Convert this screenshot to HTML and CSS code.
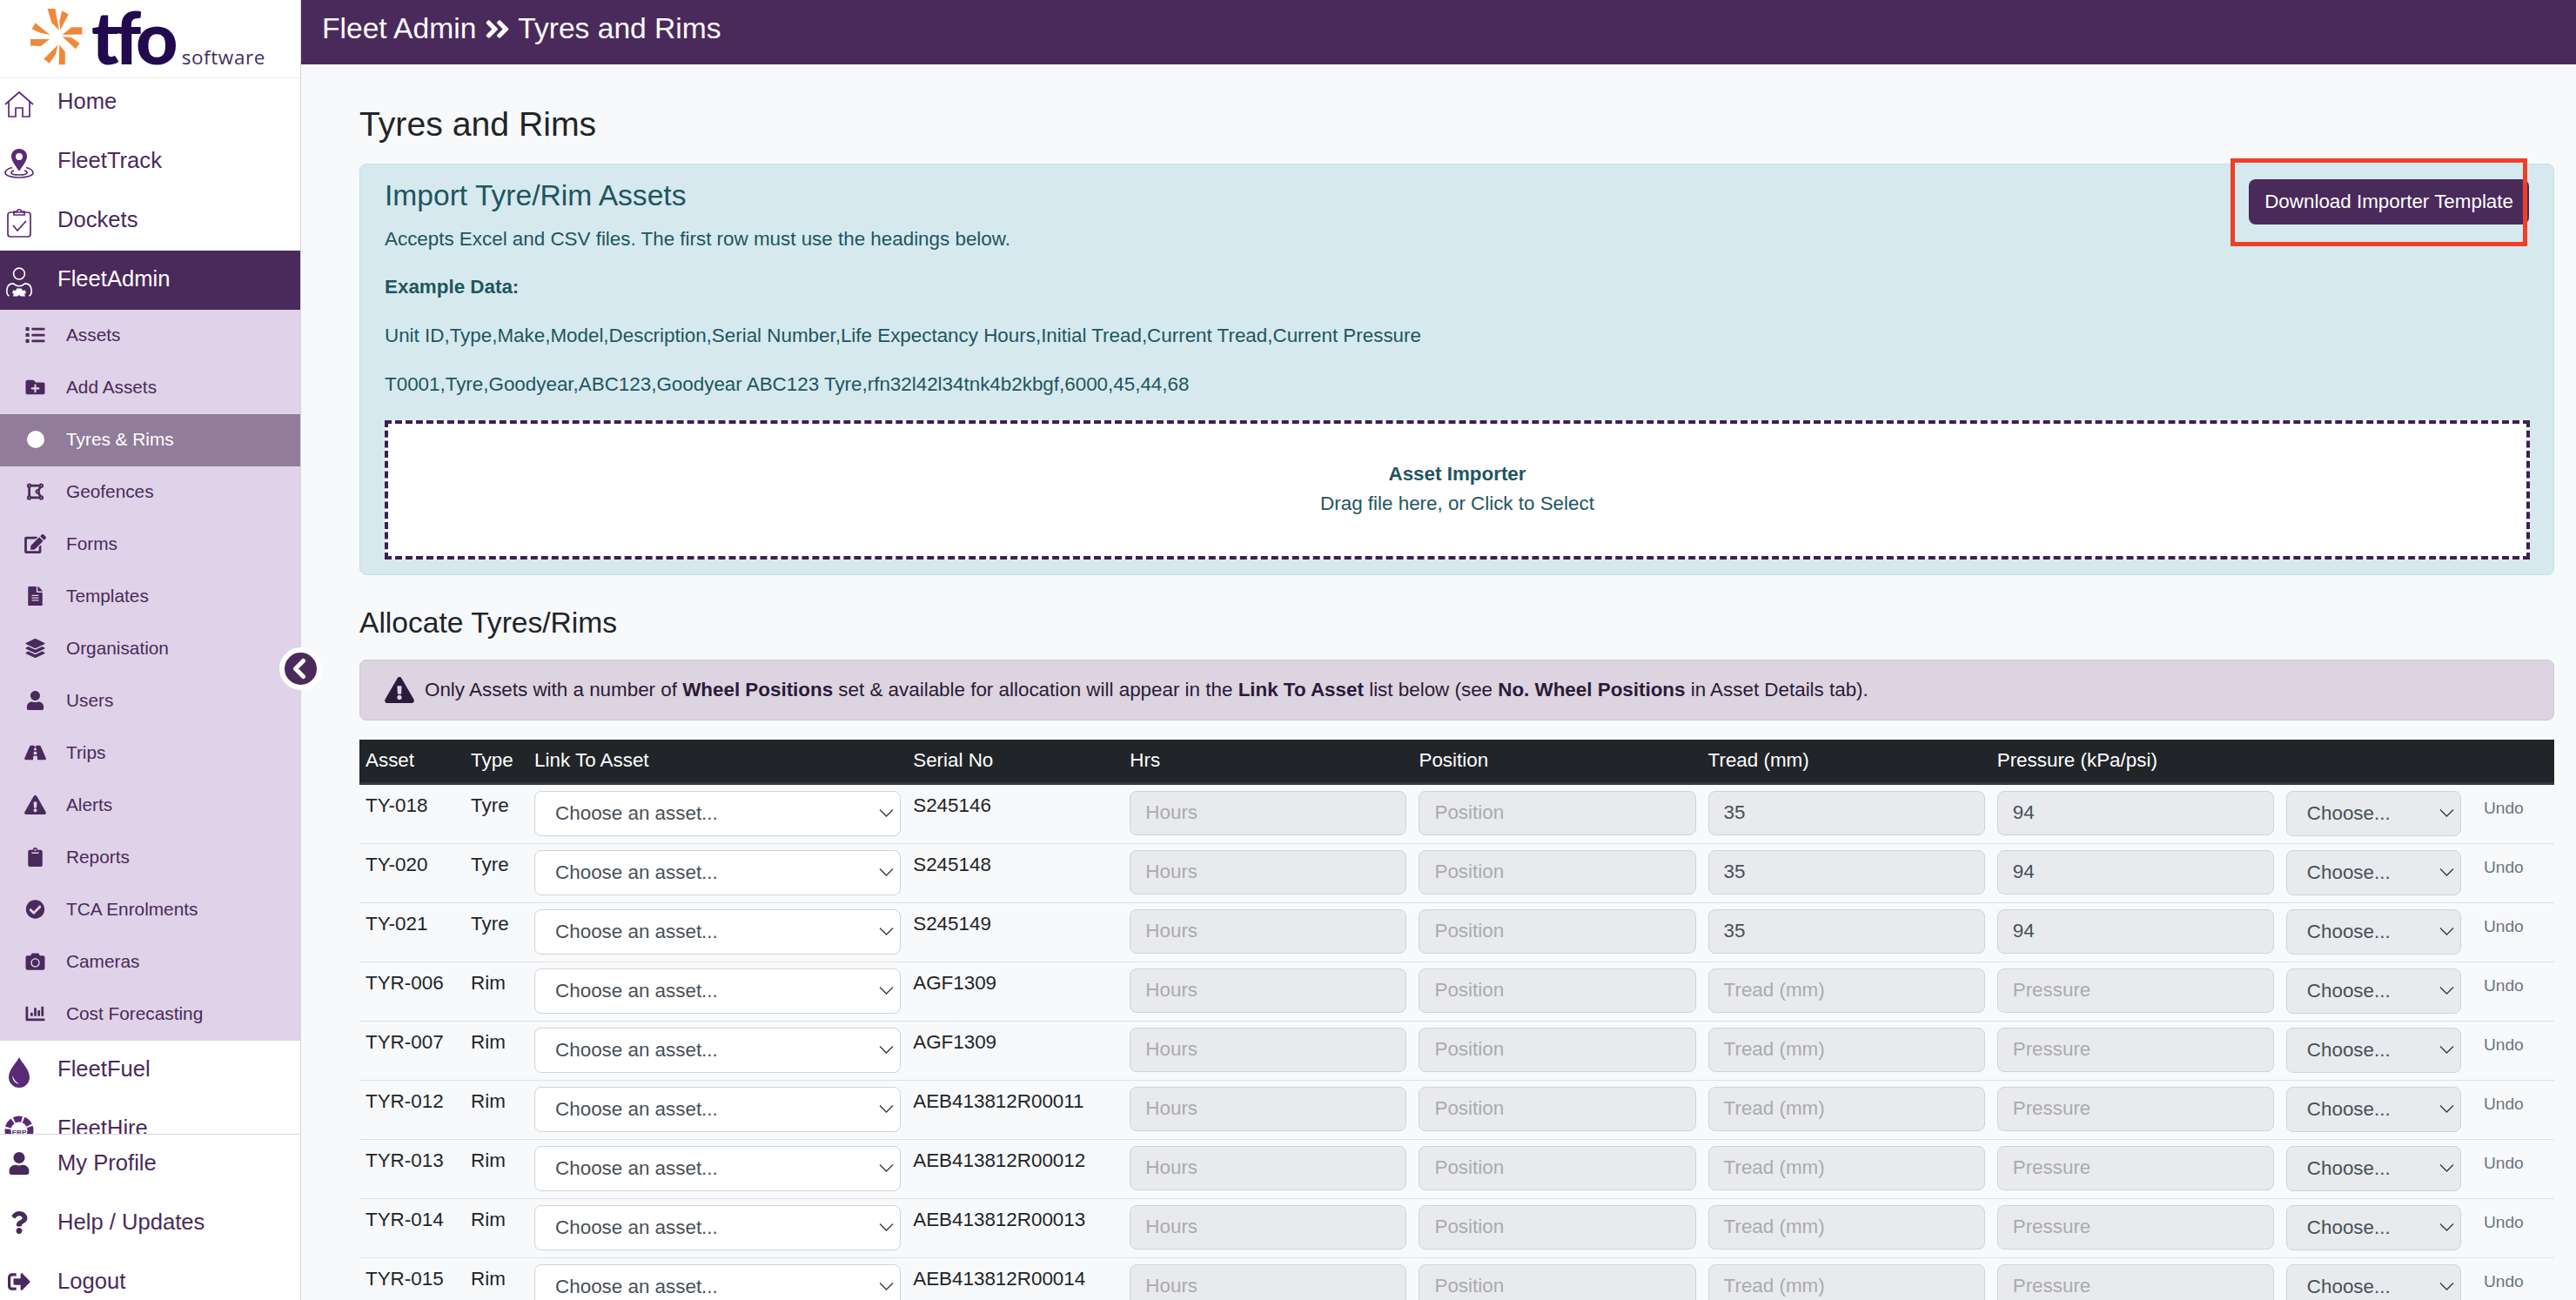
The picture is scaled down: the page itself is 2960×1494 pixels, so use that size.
FILE: index.html
```html
<!DOCTYPE html>
<html lang="en">

<head>
    <meta charset="UTF-8">
    <meta name="viewport" content="width=device-width, initial-scale=1.0">
    <title>Tyres and Rims</title>
    <link rel="stylesheet" href="styles.css">
</head>

<body>
    <svg class="iconDefs" aria-hidden="true">
        <symbol id="i-list" viewBox="0 0 512 512"><path d="M80 368H16a16 16 0 0 0-16 16v64a16 16 0 0 0 16 16h64a16 16 0 0 0 16-16v-64a16 16 0 0 0-16-16zm0-320H16A16 16 0 0 0 0 64v64a16 16 0 0 0 16 16h64a16 16 0 0 0 16-16V64a16 16 0 0 0-16-16zm0 160H16a16 16 0 0 0-16 16v64a16 16 0 0 0 16 16h64a16 16 0 0 0 16-16v-64a16 16 0 0 0-16-16zm416 176H176a16 16 0 0 0-16 16v32a16 16 0 0 0 16 16h320a16 16 0 0 0 16-16v-32a16 16 0 0 0-16-16zm0-320H176a16 16 0 0 0-16 16v32a16 16 0 0 0 16 16h320a16 16 0 0 0 16-16V80a16 16 0 0 0-16-16zm0 160H176a16 16 0 0 0-16 16v32a16 16 0 0 0 16 16h320a16 16 0 0 0 16-16v-32a16 16 0 0 0-16-16z"/></symbol>
        <symbol id="i-folder" viewBox="0 0 512 512"><path d="M464 128H272l-64-64H48C21.49 64 0 85.49 0 112v288c0 26.51 21.49 48 48 48h416c26.51 0 48-21.49 48-48V176c0-26.51-21.49-48-48-48zm-96 168c0 8.84-7.16 16-16 16h-72v72c0 8.84-7.16 16-16 16h-16c-8.84 0-16-7.16-16-16v-72h-72c-8.84 0-16-7.16-16-16v-16c0-8.84 7.16-16 16-16h72v-72c0-8.84 7.16-16 16-16h16c8.84 0 16 7.16 16 16v72h72c8.84 0 16 7.16 16 16v16z"/></symbol>
        <symbol id="i-polygon" viewBox="0 0 448 512"><path d="M384 352c-.35 0-.67.1-1.02.1l-39.2-65.32c5.07-9.17 8.22-19.56 8.22-30.78s-3.14-21.61-8.22-30.78l39.2-65.32c.35.01.67.1 1.02.1 35.35 0 64-28.65 64-64s-28.65-64-64-64c-23.63 0-44.04 12.95-55.12 32H119.12C108.04 44.95 87.63 32 64 32 28.65 32 0 60.65 0 96c0 23.63 12.95 44.04 32 55.12v209.75C12.95 371.96 0 392.37 0 416c0 35.35 28.65 64 64 64 23.63 0 44.04-12.95 55.12-32h209.75c11.09 19.05 31.49 32 55.12 32 35.35 0 64-28.65 64-64 .01-35.35-28.64-64-63.99-64zm-288 8.88V151.12A63.825 63.825 0 0 0 119.12 128h208.36l-38.46 64.1c-.35-.01-.67-.1-1.02-.1-35.35 0-64 28.65-64 64s28.65 64 64 64c.35 0 .67-.09 1.02-.1l38.46 64.1H119.12a63.748 63.748 0 0 0-23.12-23.12zM272 256c0-8.82 7.18-16 16-16s16 7.18 16 16-7.18 16-16 16-16-7.18-16-16zM400 96c0 8.82-7.18 16-16 16s-16-7.18-16-16 7.18-16 16-16 16 7.18 16 16zM64 80c8.82 0 16 7.18 16 16s-7.18 16-16 16-16-7.18-16-16 7.18-16 16-16zM48 416c0-8.82 7.18-16 16-16s16 7.18 16 16-7.18 16-16 16-16-7.18-16-16zm336 16c-8.82 0-16-7.18-16-16s7.18-16 16-16 16 7.18 16 16-7.18 16-16 16z"/></symbol>
        <symbol id="i-edit" viewBox="0 0 576 512"><path d="M402.6 83.2l90.2 90.2c3.8 3.8 3.8 10 0 13.8L274.4 405.6l-92.8 10.3c-12.4 1.4-22.9-9.1-21.5-21.5l10.3-92.8L388.8 83.2c3.8-3.8 10-3.8 13.8 0zm162-22.9l-48.8-48.8c-15.2-15.2-39.9-15.2-55.2 0l-35.4 35.4c-3.8 3.8-3.8 10 0 13.8l90.2 90.2c3.8 3.8 10 3.8 13.8 0l35.4-35.4c15.2-15.3 15.2-40 0-55.2zM384 346.2V448H64V128h229.8c3.2 0 6.2-1.3 8.5-3.5l40-40c7.6-7.6 2.2-20.5-8.5-20.5H48C21.5 64 0 85.5 0 112v352c0 26.5 21.5 48 48 48h352c26.5 0 48-21.5 48-48V306.2c0-10.7-12.9-16-20.5-8.5l-40 40c-2.2 2.3-3.5 5.3-3.5 8.5z"/></symbol>
        <symbol id="i-file" viewBox="0 0 384 512"><path d="M224 136V0H24C10.7 0 0 10.7 0 24v464c0 13.3 10.7 24 24 24h336c13.3 0 24-10.7 24-24V160H248c-13.2 0-24-10.8-24-24zm64 236c0 6.6-5.4 12-12 12H108c-6.6 0-12-5.4-12-12v-8c0-6.6 5.4-12 12-12h168c6.6 0 12 5.4 12 12v8zm0-64c0 6.6-5.4 12-12 12H108c-6.6 0-12-5.4-12-12v-8c0-6.6 5.4-12 12-12h168c6.6 0 12 5.4 12 12v8zm0-72v8c0 6.6-5.4 12-12 12H108c-6.6 0-12-5.4-12-12v-8c0-6.6 5.4-12 12-12h168c6.6 0 12 5.4 12 12zm96-114.1v6.1H256V0h6.1c6.4 0 12.5 2.5 17 7l97.9 98c4.5 4.5 7 10.6 7 16.9z"/></symbol>
        <symbol id="i-layers" viewBox="0 0 512 512"><path d="M12.41 148.02l232.94 105.67c6.8 3.09 14.49 3.09 21.29 0l232.94-105.67c16.55-7.51 16.55-32.52 0-40.03L266.65 2.31a25.607 25.607 0 0 0-21.29 0L12.41 107.98c-16.55 7.51-16.55 32.53 0 40.04zm487.18 88.28l-58.09-26.33-161.64 73.27c-7.56 3.43-15.59 5.17-23.86 5.17s-16.29-1.74-23.86-5.17L70.51 209.97l-58.1 26.33c-16.55 7.5-16.55 32.5 0 40l232.94 105.59c6.8 3.08 14.49 3.08 21.29 0L499.59 276.3c16.55-7.5 16.55-32.5 0-40zm0 127.8l-57.87-26.23-161.86 73.37c-7.56 3.43-15.59 5.17-23.86 5.17s-16.29-1.74-23.86-5.17L70.29 337.87 12.41 364.1c-16.55 7.5-16.55 32.5 0 40l232.94 105.59c6.8 3.08 14.49 3.08 21.29 0L499.59 404.1c16.55-7.5 16.55-32.5 0-40z"/></symbol>
        <symbol id="i-user" viewBox="0 0 448 512"><path d="M224 256c70.7 0 128-57.3 128-128S294.7 0 224 0 96 57.3 96 128s57.3 128 128 128zm89.6 32h-16.7c-22.2 10.2-46.9 16-72.9 16s-50.6-5.8-72.9-16h-16.7C60.2 288 0 348.2 0 422.4V464c0 26.5 21.5 48 48 48h352c26.5 0 48-21.5 48-48v-41.6c0-74.2-60.2-134.4-134.4-134.4z"/></symbol>
        <symbol id="i-road" viewBox="0 0 576 512"><path d="M573.19 402.67l-139.79-320C428.43 71.29 417.6 64 405.68 64h-97.59l2.45 23.16c.5 4.72-3.21 8.84-7.96 8.84h-29.16c-4.75 0-8.46-4.12-7.96-8.84L267.91 64h-97.59c-11.93 0-22.76 7.29-27.73 18.67L2.8 402.67C-6.45 423.86 8.31 448 30.54 448h196.84l10.31-97.68c.86-8.14 7.72-14.32 15.91-14.32h68.8c8.19 0 15.05 6.18 15.91 14.32L348.62 448h196.84c22.23 0 36.99-24.14 27.73-45.33zM260.4 135.16a8 8 0 0 1 7.96-7.16h39.29c4.09 0 7.53 3.09 7.96 7.16l4.6 43.58c.75 7.09-4.81 13.26-11.93 13.26h-40.54c-7.13 0-12.68-6.17-11.93-13.26l4.59-43.58zM315.64 304h-55.29c-9.5 0-16.91-8.23-15.91-17.68l5.07-48c.86-8.14 7.72-14.32 15.91-14.32h45.15c8.19 0 15.05 6.18 15.91 14.32l5.07 48c1 9.45-6.41 17.68-15.91 17.68z"/></symbol>
        <symbol id="i-warn" viewBox="0 0 576 512"><path d="M569.517 440.013C587.975 472.007 564.806 512 527.94 512H48.054c-36.937 0-59.999-40.055-41.577-71.987L246.423 23.985c18.467-32.009 64.72-31.951 83.154 0l239.94 416.028zM288 354c-25.405 0-46 20.595-46 46s20.595 46 46 46 46-20.595 46-46-20.595-46-46-46zm-43.673-165.346l7.418 136c.347 6.364 5.609 11.346 11.982 11.346h48.546c6.373 0 11.635-4.982 11.982-11.346l7.418-136c.375-6.874-5.098-12.654-11.982-12.654h-63.383c-6.884 0-12.356 5.78-11.981 12.654z"/></symbol>
        <symbol id="i-clipboard" viewBox="0 0 384 512"><path d="M384 112v352c0 26.51-21.49 48-48 48H48c-26.51 0-48-21.49-48-48V112c0-26.51 21.49-48 48-48h80c0-35.29 28.71-64 64-64s64 28.71 64 64h80c26.51 0 48 21.49 48 48zM192 40c-13.255 0-24 10.745-24 24s10.745 24 24 24 24-10.745 24-24-10.745-24-24-24m96 114v-20a6 6 0 0 0-6-6H102a6 6 0 0 0-6 6v20a6 6 0 0 0 6 6h180a6 6 0 0 0 6-6z"/></symbol>
        <symbol id="i-check" viewBox="0 0 512 512"><path d="M504 256c0 136.967-111.033 248-248 248S8 392.967 8 256 119.033 8 256 8s248 111.033 248 248zM227.314 387.314l184-184c6.248-6.248 6.248-16.379 0-22.627l-22.627-22.627c-6.248-6.249-16.379-6.249-22.628 0L216 308.118l-70.059-70.059c-6.248-6.248-16.379-6.248-22.628 0l-22.627 22.627c-6.248 6.248-6.248 16.379 0 22.627l104 104c6.249 6.249 16.379 6.249 22.628.001z"/></symbol>
        <symbol id="i-camera" viewBox="0 0 512 512"><path d="M512 144v288c0 26.5-21.5 48-48 48H48c-26.5 0-48-21.5-48-48V144c0-26.5 21.5-48 48-48h88l12.3-32.9c7-18.7 24.9-31.1 44.9-31.1h125.5c20 0 37.9 12.4 44.9 31.1L376 96h88c26.5 0 48 21.5 48 48zM376 288c0-66.2-53.8-120-120-120s-120 53.8-120 120 53.8 120 120 120 120-53.8 120-120zm-32 0c0 48.5-39.5 88-88 88s-88-39.5-88-88 39.5-88 88-88 88 39.5 88 88z"/></symbol>
        <symbol id="i-chart" viewBox="0 0 512 512"><path d="M332.8 320h38.4c6.4 0 12.8-6.4 12.8-12.8V172.8c0-6.4-6.4-12.8-12.8-12.8h-38.4c-6.4 0-12.8 6.4-12.8 12.8v134.4c0 6.4 6.4 12.8 12.8 12.8zm96 0h38.4c6.4 0 12.8-6.4 12.8-12.8V76.8c0-6.4-6.4-12.8-12.8-12.8h-38.4c-6.4 0-12.8 6.4-12.8 12.8v230.4c0 6.4 6.4 12.8 12.8 12.8zm-288 0h38.4c6.4 0 12.8-6.4 12.8-12.8v-70.4c0-6.4-6.4-12.8-12.8-12.8h-38.4c-6.4 0-12.8 6.4-12.8 12.8v70.4c0 6.4 6.4 12.8 12.8 12.8zm96 0h38.4c6.4 0 12.8-6.4 12.8-12.8V108.8c0-6.4-6.4-12.8-12.8-12.8h-38.4c-6.4 0-12.8 6.4-12.8 12.8v198.4c0 6.4 6.4 12.8 12.8 12.8zM496 384H64V80c0-8.84-7.16-16-16-16H16C7.16 64 0 71.16 0 80v336c0 17.67 14.33 32 32 32h464c8.84 0 16-7.16 16-16v-32c0-8.84-7.16-16-16-16z"/></symbol>
        <symbol id="i-question" viewBox="0 0 384 512"><path d="M202.021 0C122.202 0 70.503 32.703 29.914 91.026c-7.363 10.58-5.093 25.086 5.178 32.874l43.138 32.709c10.373 7.865 25.132 6.026 33.253-4.148 25.049-31.381 43.63-49.449 82.757-49.449 30.764 0 68.816 19.799 68.816 49.631 0 22.552-18.617 34.134-48.993 51.164-35.423 19.86-82.299 44.576-82.299 106.405V320c0 13.255 10.745 24 24 24h72.471c13.255 0 24-10.745 24-24v-5.773c0-42.86 125.268-44.645 125.268-160.627C377.504 66.256 286.902 0 202.021 0zM192 373.459c-38.196 0-69.271 31.075-69.271 69.271 0 38.195 31.075 69.27 69.271 69.27s69.271-31.075 69.271-69.271-31.075-69.27-69.271-69.27z"/></symbol>
        <symbol id="i-logout" viewBox="0 0 512 512"><path d="M497 273L329 441c-15 15-41 4.5-41-17v-96H152c-13.3 0-24-10.7-24-24v-96c0-13.3 10.7-24 24-24h136V88c0-21.4 25.9-32 41-17l168 168c9.3 9.4 9.3 24.6 0 34zM192 436v-40c0-6.6-5.4-12-12-12H96c-17.7 0-32-14.3-32-32V160c0-17.7 14.3-32 32-32h84c6.6 0 12-5.4 12-12V76c0-6.6-5.4-12-12-12H96c-53 0-96 43-96 96v192c0 53 43 96 96 96h84c6.6 0 12-5.4 12-12z"/></symbol>
        <symbol id="i-double" viewBox="0 0 448 512"><path d="M224.3 273l-136 136c-9.4 9.4-24.6 9.4-33.9 0l-22.6-22.6c-9.4-9.4-9.4-24.6 0-33.9l96.4-96.4-96.4-96.4c-9.4-9.4-9.4-24.6 0-33.9L54.3 103c9.4-9.4 24.6-9.4 33.9 0l136 136c9.5 9.4 9.5 24.6.1 34zm192-34l-136-136c-9.4-9.4-24.6-9.4-33.9 0l-22.6 22.6c-9.4 9.4-9.4 24.6 0 33.9l96.4 96.4-96.4 96.4c-9.4 9.4-9.4 24.6 0 33.9l22.6 22.6c9.4 9.4 24.6 9.4 33.9 0l136-136c9.4-9.2 9.4-24.4 0-33.8z"/></symbol>
    </svg>

    <div class="app">
        <aside class="sidebar">
            <div class="logo">
                <svg class="logoMark" viewBox="100 25 190 202">
                    <polygon points="163,28 190,28 204,104 178,78"/>
                    <polygon points="214,35 237,48 208,104 205,72"/>
                    <polygon points="285,93 285,118 215,120 248,93"/>
                    <polygon points="277,150 262,170 215,126 248,130"/>
                    <polygon points="225,225 203,225 205,155 225,180"/>
                    <polygon points="170,220 150,205 200,155 192,188"/>
                    <polygon points="103,158 103,135 170,135 140,160"/>
                    <polygon points="108,100 120,78 172,120 138,113"/>
                </svg>
                <span class="logoName">tfo</span>
                <span class="logoSub">software</span>
            </div>

            <nav class="navScroll">
                <a class="navItem">
                    <span class="navIcon">
                        <svg class="drawn" viewBox="0 0 34 30"><path d="M1 15 17 1l16 14M5 12v17h8V19h8v10h8V12"/></svg>
                    </span>
                    <span class="navText">Home</span>
                </a>
                <a class="navItem">
                    <span class="navIcon">
                        <svg class="drawn" viewBox="0 0 34 34"><path d="M9 21.5C3.5 23 1 25 1 27.500 1 30.800 8 33 17 33s16-2.200 16-5.500c0-2.500-2.500-4.500-8-6"/><path d="M11 25c-2 .6-3 1.500-3 2.500C8 29 12 30 17 30s9-1 9-2.500c0-1-1-1.900-3-2.500"/><path class="drawnFill" fill-rule="evenodd" d="M17 0c5.200 0 9 3.800 9 8.800 0 5-5 11-9 17-4-6-9-12-9-17C8 3.800 11.800 0 17 0zm0 5a4 4 0 1 0 0 8 4 4 0 0 0 0-8z"/></svg>
                    </span>
                    <span class="navText">FleetTrack</span>
                </a>
                <a class="navItem">
                    <span class="navIcon">
                        <svg class="drawn" viewBox="0 0 34 34"><rect x="4" y="5" width="26" height="28" rx="3"/><path d="M11 8V4h3.500c.5-3 4.500-3 5 0H23v4zM10 20l5 6 10-11"/></svg>
                    </span>
                    <span class="navText">Dockets</span>
                </a>
                <a class="navItem navItemActive">
                    <span class="navIcon">
                        <svg class="drawn" viewBox="0 0 34 36"><circle cx="17" cy="8" r="6.800"/><path d="M5 35c-2.500-1-3-3-3-6 0-6 3-9 8-9 2 2 4 3 7 3s5-1 7-3c5 0 8 3 8 9 0 3-.5 5-3 6"/><path class="drawnFill" d="M14 26h6l1 2.500 3-.5 1.500 3-2 2 1 2.500h-5.500L17 34l-2 1.500H9.500l1-2.500-2-2 1.500-3 3 .5z"/></svg>
                    </span>
                    <span class="navText">FleetAdmin</span>
                </a>

                <div class="subNav">
                    <a class="subItem"><svg class="subIcon"><use href="#i-list"/></svg><span>Assets</span></a>
                    <a class="subItem"><svg class="subIcon"><use href="#i-folder"/></svg><span>Add Assets</span></a>
                    <a class="subItem subItemActive"><span class="subDot"></span><span>Tyres &amp; Rims</span></a>
                    <a class="subItem"><svg class="subIcon"><use href="#i-polygon"/></svg><span>Geofences</span></a>
                    <a class="subItem"><svg class="subIcon"><use href="#i-edit"/></svg><span>Forms</span></a>
                    <a class="subItem"><svg class="subIcon"><use href="#i-file"/></svg><span>Templates</span></a>
                    <a class="subItem"><svg class="subIcon"><use href="#i-layers"/></svg><span>Organisation</span></a>
                    <a class="subItem"><svg class="subIcon"><use href="#i-user"/></svg><span>Users</span></a>
                    <a class="subItem"><svg class="subIcon"><use href="#i-road"/></svg><span>Trips</span></a>
                    <a class="subItem"><svg class="subIcon"><use href="#i-warn"/></svg><span>Alerts</span></a>
                    <a class="subItem"><svg class="subIcon"><use href="#i-clipboard"/></svg><span>Reports</span></a>
                    <a class="subItem"><svg class="subIcon"><use href="#i-check"/></svg><span>TCA Enrolments</span></a>
                    <a class="subItem"><svg class="subIcon"><use href="#i-camera"/></svg><span>Cameras</span></a>
                    <a class="subItem"><svg class="subIcon"><use href="#i-chart"/></svg><span>Cost Forecasting</span></a>
                </div>

                <a class="navItem">
                    <span class="navIcon">
                        <svg class="fuelIcon" viewBox="0 0 24 35"><path d="M12 0c2 5 12 14 12 23a12 12 0 0 1-24 0C0 14 10 5 12 0z"/><path class="fuelShine" d="M4.500 21c-.5 5 2 9 7.500 9.500-3.500-1.500-6-4.500-7.500-9.500z"/></svg>
                    </span>
                    <span class="navText">FleetFuel</span>
                </a>
                <a class="navItem">
                    <span class="navIcon">
                        <svg class="hireIcon" viewBox="0 0 34 34">
                            <circle class="hireRing" cx="17" cy="17" r="13"/>
                            <text class="hireText" x="17" y="22">ERP</text>
                        </svg>
                    </span>
                    <span class="navText">FleetHire</span>
                </a>
            </nav>

            <div class="navFooter">
                <a class="navItem"><span class="navIcon"><svg class="footIcon"><use href="#i-user"/></svg></span><span class="navText">My Profile</span></a>
                <a class="navItem"><span class="navIcon"><svg class="footIcon"><use href="#i-question"/></svg></span><span class="navText">Help / Updates</span></a>
                <a class="navItem"><span class="navIcon"><svg class="footIcon"><use href="#i-logout"/></svg></span><span class="navText">Logout</span></a>
            </div>

            <button class="collapseBtn" aria-label="Collapse menu">
                <svg viewBox="0 0 37 37"><path d="M21.500 9.500 12.500 18.500l9 9"/></svg>
            </button>
        </aside>

        <div class="main">
            <header class="topBar">
                <span>Fleet Admin</span>
                <svg class="crumbIcon"><use href="#i-double"/></svg>
                <span>Tyres and Rims</span>
            </header>

            <div class="content">
                <h1 class="pageTitle">Tyres and Rims</h1>

                <section class="importBox">
                    <button class="downloadBtn">Download Importer Template</button>
                    <h2 class="importTitle">Import Tyre/Rim Assets</h2>
                    <p>Accepts Excel and CSV files. The first row must use the headings below.</p>
                    <p><b>Example Data:</b></p>
                    <p>Unit ID,Type,Make,Model,Description,Serial Number,Life Expectancy Hours,Initial Tread,Current Tread,Current Pressure</p>
                    <p>T0001,Tyre,Goodyear,ABC123,Goodyear ABC123 Tyre,rfn32l42l34tnk4b2kbgf,6000,45,44,68</p>
                    <div class="dropZone">
                        <b>Asset Importer</b>
                        <span>Drag file here, or Click to Select</span>
                    </div>
                    <div class="callout"></div>
                </section>

                <h2 class="allocTitle">Allocate Tyres/Rims</h2>

                <div class="noticeBar">
                    <svg class="noticeIcon"><use href="#i-warn"/></svg>
                    <span>Only Assets with a number of <b>Wheel Positions</b> set &amp; available for allocation will appear in the <b>Link To Asset</b> list below (see <b>No. Wheel Positions</b> in Asset Details tab).</span>
                </div>

                <table class="allocTable">
                    <colgroup>
                        <col class="colAsset"><col class="colType"><col class="colLink"><col class="colSerial">
                        <col class="colField"><col class="colField"><col class="colField"><col class="colField">
                        <col class="colChoose"><col class="colUndo">
                    </colgroup>
                    <thead>
                        <tr><th>Asset</th><th>Type</th><th>Link To Asset</th><th>Serial No</th><th>Hrs</th><th>Position</th><th>Tread (mm)</th><th>Pressure (kPa/psi)</th><th></th><th></th></tr>
                    </thead>
                    <tbody>
                        <tr>
                            <td>TY-018</td><td>Tyre</td>
                            <td><select class="picker"><option>Choose an asset...</option></select></td>
                            <td>S245146</td>
                            <td><input class="field" disabled placeholder="Hours"></td>
                            <td><input class="field" disabled placeholder="Position"></td>
                            <td><input class="field" disabled value="35"></td>
                            <td><input class="field" disabled value="94"></td>
                            <td><select class="picker pickerOff" disabled><option>Choose...</option></select></td>
                            <td class="undo">Undo</td>
                        </tr>
                        <tr>
                            <td>TY-020</td><td>Tyre</td>
                            <td><select class="picker"><option>Choose an asset...</option></select></td>
                            <td>S245148</td>
                            <td><input class="field" disabled placeholder="Hours"></td>
                            <td><input class="field" disabled placeholder="Position"></td>
                            <td><input class="field" disabled value="35"></td>
                            <td><input class="field" disabled value="94"></td>
                            <td><select class="picker pickerOff" disabled><option>Choose...</option></select></td>
                            <td class="undo">Undo</td>
                        </tr>
                        <tr>
                            <td>TY-021</td><td>Tyre</td>
                            <td><select class="picker"><option>Choose an asset...</option></select></td>
                            <td>S245149</td>
                            <td><input class="field" disabled placeholder="Hours"></td>
                            <td><input class="field" disabled placeholder="Position"></td>
                            <td><input class="field" disabled value="35"></td>
                            <td><input class="field" disabled value="94"></td>
                            <td><select class="picker pickerOff" disabled><option>Choose...</option></select></td>
                            <td class="undo">Undo</td>
                        </tr>
                        <tr>
                            <td>TYR-006</td><td>Rim</td>
                            <td><select class="picker"><option>Choose an asset...</option></select></td>
                            <td>AGF1309</td>
                            <td><input class="field" disabled placeholder="Hours"></td>
                            <td><input class="field" disabled placeholder="Position"></td>
                            <td><input class="field" disabled placeholder="Tread (mm)"></td>
                            <td><input class="field" disabled placeholder="Pressure"></td>
                            <td><select class="picker pickerOff" disabled><option>Choose...</option></select></td>
                            <td class="undo">Undo</td>
                        </tr>
                        <tr>
                            <td>TYR-007</td><td>Rim</td>
                            <td><select class="picker"><option>Choose an asset...</option></select></td>
                            <td>AGF1309</td>
                            <td><input class="field" disabled placeholder="Hours"></td>
                            <td><input class="field" disabled placeholder="Position"></td>
                            <td><input class="field" disabled placeholder="Tread (mm)"></td>
                            <td><input class="field" disabled placeholder="Pressure"></td>
                            <td><select class="picker pickerOff" disabled><option>Choose...</option></select></td>
                            <td class="undo">Undo</td>
                        </tr>
                        <tr>
                            <td>TYR-012</td><td>Rim</td>
                            <td><select class="picker"><option>Choose an asset...</option></select></td>
                            <td>AEB413812R00011</td>
                            <td><input class="field" disabled placeholder="Hours"></td>
                            <td><input class="field" disabled placeholder="Position"></td>
                            <td><input class="field" disabled placeholder="Tread (mm)"></td>
                            <td><input class="field" disabled placeholder="Pressure"></td>
                            <td><select class="picker pickerOff" disabled><option>Choose...</option></select></td>
                            <td class="undo">Undo</td>
                        </tr>
                        <tr>
                            <td>TYR-013</td><td>Rim</td>
                            <td><select class="picker"><option>Choose an asset...</option></select></td>
                            <td>AEB413812R00012</td>
                            <td><input class="field" disabled placeholder="Hours"></td>
                            <td><input class="field" disabled placeholder="Position"></td>
                            <td><input class="field" disabled placeholder="Tread (mm)"></td>
                            <td><input class="field" disabled placeholder="Pressure"></td>
                            <td><select class="picker pickerOff" disabled><option>Choose...</option></select></td>
                            <td class="undo">Undo</td>
                        </tr>
                        <tr>
                            <td>TYR-014</td><td>Rim</td>
                            <td><select class="picker"><option>Choose an asset...</option></select></td>
                            <td>AEB413812R00013</td>
                            <td><input class="field" disabled placeholder="Hours"></td>
                            <td><input class="field" disabled placeholder="Position"></td>
                            <td><input class="field" disabled placeholder="Tread (mm)"></td>
                            <td><input class="field" disabled placeholder="Pressure"></td>
                            <td><select class="picker pickerOff" disabled><option>Choose...</option></select></td>
                            <td class="undo">Undo</td>
                        </tr>
                        <tr>
                            <td>TYR-015</td><td>Rim</td>
                            <td><select class="picker"><option>Choose an asset...</option></select></td>
                            <td>AEB413812R00014</td>
                            <td><input class="field" disabled placeholder="Hours"></td>
                            <td><input class="field" disabled placeholder="Position"></td>
                            <td><input class="field" disabled placeholder="Tread (mm)"></td>
                            <td><input class="field" disabled placeholder="Pressure"></td>
                            <td><select class="picker pickerOff" disabled><option>Choose...</option></select></td>
                            <td class="undo">Undo</td>
                        </tr>
                    </tbody>
                </table>
            </div>
        </div>
    </div>
</body>

</html>
```

FILE: styles.css
```css
* {
    margin: 0px;
    padding: 0px;
    box-sizing: border-box;
}

html,
body {
    height: 100%;
    overflow: hidden;
}

body {
    font-family: "Liberation Sans", Arial, sans-serif;
    font-size: 22.4px;
    line-height: 33.6px;
    color: #212529;
    background-color: #f8f9fa;
}

.iconDefs {
    display: none;
}

.app {
    display: flex;
    height: 100vh;
}

/* sidebar */

.sidebar {
    position: relative;
    flex: 0 0 346px;
    display: flex;
    flex-direction: column;
    height: 100%;
    background-color: white;
    border-right: 1px solid #d6d6da;
    color: #4a2a5b;
    z-index: 2;
}

.logo {
    position: relative;
    z-index: 1;
    flex: 0 0 90px;
    display: flex;
    align-items: flex-start;
    background-color: white;
    border-bottom: 1px solid #ececee;
    padding: 9px 0px 0px 34px;
}

.logoMark {
    flex: 0 0 62px;
    width: 62px;
    height: 66px;
    fill: #f0883a;
}

.logoName {
    margin: -9px 0px 0px 9px;
    font-family: Lato, sans-serif;
    font-weight: 900;
    font-size: 84px;
    line-height: 84px;
    letter-spacing: -5px;
    color: #220a4e;
}

.logoSub {
    margin: 42px 0px 0px 9px;
    font-family: "Open Sans", sans-serif;
    font-size: 22.5px;
    line-height: 30px;
    letter-spacing: 0.6px;
    color: #42305e;
}

.navScroll {
    flex: 1;
    min-height: 0;
    overflow: hidden;
}

.navScroll > .navItem:first-child {
    margin-top: -6px;
}

.navItem {
    display: flex;
    align-items: center;
    height: 68px;
    font-size: 25.6px;
}

.navIcon {
    flex: 0 0 43px;
    display: flex;
    justify-content: center;
    margin-top: 4px;
}

.navFooter .navIcon {
    margin-top: -3px;
}

.navText {
    margin-left: 23px;
    padding-bottom: 2px;
}

.navItemActive {
    background-color: #4a2a5b;
    color: white;
}

.drawn {
    width: 34px;
    height: 34px;
    fill: none;
    stroke: #5a2a79;
    stroke-width: 1.7;
}

.navItemActive .drawn {
    stroke: white;
}

.drawnFill {
    fill: #5a2a79;
    stroke: none;
}

.navItemActive .drawnFill {
    fill: white;
}

.fuelIcon {
    width: 24px;
    height: 35px;
    fill: #5a2a79;
}

.fuelShine {
    fill: white;
}

.hireIcon {
    width: 34px;
    height: 34px;
    margin-top: -2px;
}

.hireRing {
    fill: none;
    stroke: #5a2a79;
    stroke-width: 7;
    stroke-dasharray: 9 2;
}

.hireText {
    font-size: 8px;
    font-weight: bold;
    text-anchor: middle;
    fill: #5a2a79;
}

.footIcon {
    width: 26px;
    height: 26px;
    fill: #4a2a5b;
}

.subNav {
    background-color: #e0d2e8;
}

.subItem {
    display: flex;
    align-items: center;
    height: 60px;
    padding-left: 28px;
    padding-bottom: 2px;
    font-size: 20.8px;
}

.subIcon {
    flex: 0 0 25px;
    width: 25px;
    height: 22px;
    margin-right: 23px;
    fill: #4a2a5b;
}

.subDot {
    flex: 0 0 20px;
    width: 20px;
    height: 20px;
    margin: 0px 25.5px 0px 2.500px;
    border-radius: 50%;
    background-color: white;
}

.subItemActive {
    background-color: #917d99;
    color: white;
}

.navFooter {
    flex: 0 0 auto;
    height: 191px;
    border-top: 1px solid #d6d6da;
    overflow: hidden;
}

/* sits half over the sidebar edge */
.collapseBtn {
    position: absolute;
    top: 744px;
    right: -25px;
    width: 49px;
    height: 49px;
    border: 6px solid white;
    border-radius: 50%;
    background-color: #4a2a5b;
}

.collapseBtn svg {
    display: block;
    width: 37px;
    height: 37px;
    fill: none;
    stroke: white;
    stroke-width: 5;
    stroke-linecap: round;
    stroke-linejoin: round;
}

/* main area */

.main {
    flex: 1;
    min-width: 0;
    height: 100%;
    overflow: hidden;
}

.topBar {
    display: flex;
    align-items: flex-start;
    height: 74px;
    padding: 13px 0px 0px 24px;
    background-color: #4a2a5b;
    color: white;
    font-size: 33.6px;
    line-height: 40px;
}

.crumbIcon {
    width: 29px;
    height: 33px;
    margin: 4px 9px 0px 10px;
    fill: white;
}

.content {
    padding: 46px 25px 0px 67px;
}

.pageTitle {
    font-size: 39.2px;
    font-weight: normal;
    line-height: 46px;
    margin-bottom: 22px;
}

.importBox {
    position: relative;
    padding: 16px 27px 17px 28px;
    background-color: #d6e9ef;
    border: 1px solid #c4e2e9;
    border-radius: 8px;
    color: #1f5560;
}

.importBox p {
    margin-bottom: 22.4px;
}

.importTitle {
    font-size: 33.6px;
    font-weight: normal;
    line-height: 40px;
    margin-bottom: 12.5px;
}

.downloadBtn {
    float: right;
    height: 52px;
    margin: 1px 1px 0px 0px;
    padding: 0px 18px;
    border: none;
    border-radius: 8px;
    background-color: #4a2a5b;
    color: white;
    font-family: inherit;
    font-size: 22.4px;
}

.dropZone {
    display: flex;
    flex-direction: column;
    align-items: center;
    justify-content: center;
    height: 160px;
    margin-top: 24px;
    padding-bottom: 2px;
    background-color: white;
    border: 4px dashed #3d1f52;
}

/* red highlight box drawn over the button */
.callout {
    position: absolute;
    top: -7px;
    left: 2149px;
    width: 341px;
    height: 101px;
    border: 5px solid #ee4028;
}

.allocTitle {
    font-size: 33.6px;
    font-weight: normal;
    line-height: 40px;
    margin: 34.5px 0px 22.4px;
}

.noticeBar {
    display: flex;
    align-items: center;
    gap: 12px;
    height: 70px;
    padding-left: 28px;
    margin-bottom: 22px;
    background-color: #dcd4e0;
    border: 1px solid #d0c8d8;
    border-radius: 8px;
    color: #2c1a3a;
}

.noticeIcon {
    flex: 0 0 34px;
    width: 34px;
    height: 30px;
    fill: #2c1a3a;
}

.allocTable {
    width: 100%;
    table-layout: fixed;
    border-collapse: separate;
    border-spacing: 0px;
}

.colAsset { width: 121px; }
.colType { width: 73px; }
.colLink { width: 435px; }
.colSerial { width: 249px; }
.colField { width: 332px; }
.colChoose { width: 215px; }
.colUndo { width: 100px; }

.allocTable th {
    height: 51px;
    padding: 7px 7px 8px;
    text-align: left;
    font-weight: normal;
    background-color: #212529;
    border-bottom: 3px solid #32383e;
    color: white;
}

.allocTable td {
    padding: 7px 7px 8px;
    vertical-align: top;
    border-bottom: 1px solid #dee2e6;
    white-space: nowrap;
}

.allocTable td.undo {
    padding: 13px 0px 0px 19px;
    font-size: 19.2px;
    line-height: 28px;
    color: #6c757d;
}

.field,
.picker {
    display: block;
    width: 100%;
    border: 1px solid #ced4da;
    border-radius: 8px;
    font-family: inherit;
    font-size: 22.4px;
    color: #495057;
    opacity: 1;
}

.field {
    height: 51px;
    padding: 0px 17px;
    background-color: #e9eaed;
}

.field::placeholder {
    color: #a9abae;
    opacity: 1;
}

.picker {
    height: 52px;
    padding: 0px 30px 0px 23px;
    appearance: none;
    background: white url("data:image/svg+xml,%3Csvg xmlns='http://www.w3.org/2000/svg' viewBox='0 0 17 9'%3E%3Cpath d='M1 .5l7.500 7.500L16 .5' fill='none' stroke='%23343a40' stroke-width='1.300'/%3E%3C/svg%3E") no-repeat right 7px center / 17px 9px;
}

.pickerOff {
    background-color: #e9eaed;
}
```
